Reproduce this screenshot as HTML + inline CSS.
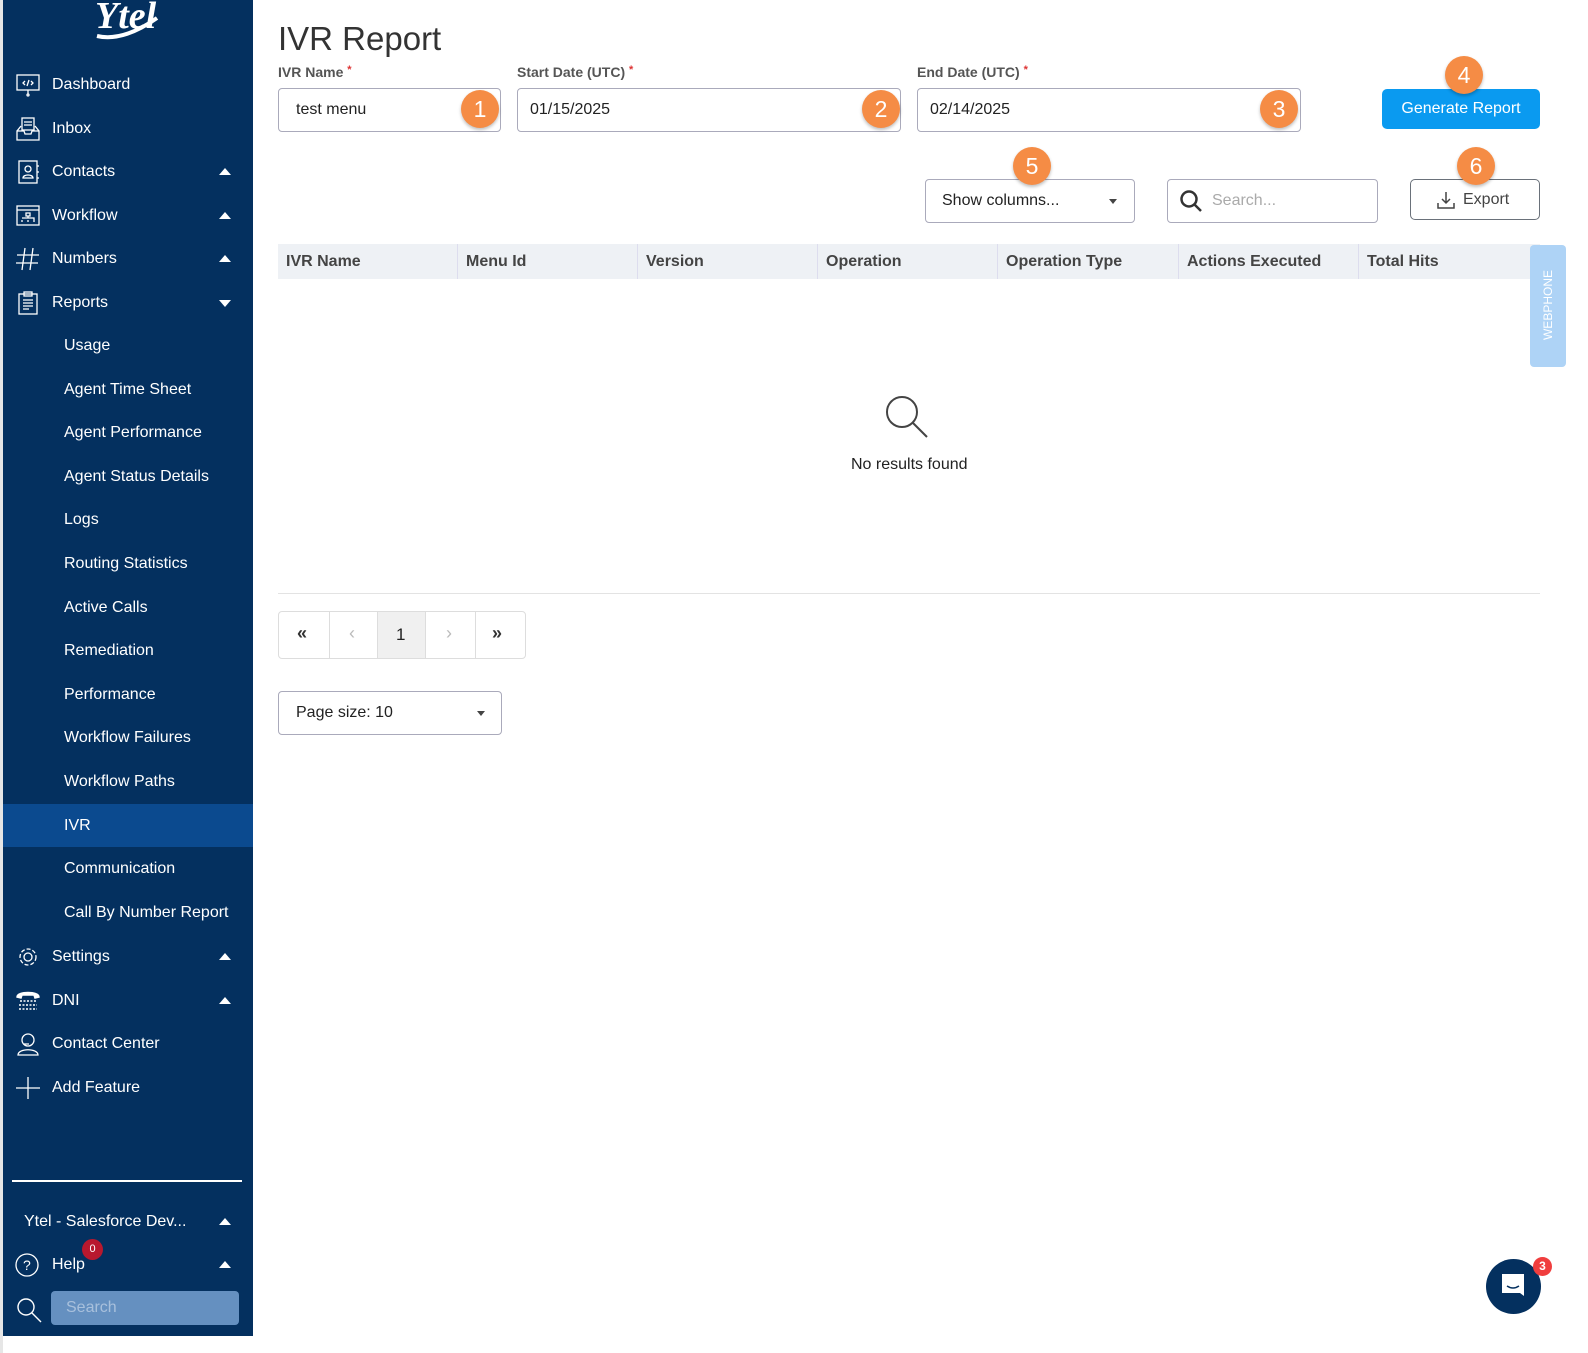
<!DOCTYPE html>
<html><head><meta charset="utf-8"><style>
*{box-sizing:border-box;margin:0;padding:0}
body{width:1588px;height:1353px;background:#fff;font-family:"Liberation Sans",sans-serif;position:relative;overflow:hidden;color:#222}
.sb{position:absolute;left:3px;top:0;width:250px;height:1336px;background:#04305f;color:#fff}
.it{position:absolute;left:0;width:250px;height:43px;font-size:16px;display:flex;align-items:center}
.it .ic{position:absolute;left:12px;top:10px;width:26px;height:24px}
.it .t{position:absolute;left:49px}
.it .s{position:absolute;left:61px}
.car{position:absolute;left:216px;width:0;height:0;border-left:6px solid transparent;border-right:6px solid transparent}
.up{border-bottom:7px solid #fff}
.dn{border-top:7px solid #fff}
.a{position:absolute}
.lbl{font-size:14px;font-weight:bold;color:#555;position:absolute;top:64px}
.lbl b{color:#d33;font-size:11px;vertical-align:top}
.inp{position:absolute;top:88px;height:44px;border:1px solid #aab;border-radius:4px;font-size:16px;padding:12px 0 0 12px;color:#222}
.badge{position:absolute;width:38px;height:38px;border-radius:50%;background:#f58c45;color:#fff;font-size:23px;text-align:center;line-height:38px;box-shadow:0 2px 3px rgba(0,0,0,.25)}
.th{position:absolute;top:244px;height:35px;background:#eef1f5;font-size:16px;font-weight:bold;color:#444;padding:9px 0 0 8px;border-right:1px solid #dde}
</style></head><body>
<div style="position:absolute;left:0;top:0;width:3px;height:1353px;background:#e6e6e6"></div>
<div class="sb">
 <div class="a" style="left:92px;top:-6px;font-size:38px;font-weight:bold;font-style:italic;font-family:'Liberation Serif',serif">Ytel</div>
 <svg class="a" style="left:90px;top:14px" width="70" height="28"><path d="M4 22 Q30 28 64 4" stroke="#fff" stroke-width="4" fill="none"/></svg>

 <div class="it" style="top:63px"><svg class="ic" viewBox="0 0 26 24" fill="none" stroke="#fff" stroke-width="1.3"><rect x="2" y="2" width="22" height="15"/><path d="M10 8l-2 2 2 2M16 8l2 2-2 2M14 7l-2 6M13 17v4"/><circle cx="13" cy="22" r="1"/></svg><span class="t">Dashboard</span></div>
 <div class="it" style="top:107px"><svg class="ic" viewBox="0 0 26 24" fill="none" stroke="#fff" stroke-width="1.3"><rect x="7" y="1" width="12" height="12"/><path d="M9 5h8M9 8h8M2 14l4-5M24 14l-4-5M2 14h7l1 3h6l1-3h7v9H2z"/></svg><span class="t">Inbox</span></div>
 <div class="it" style="top:150px"><svg class="ic" viewBox="0 0 26 24" fill="none" stroke="#fff" stroke-width="1.3"><rect x="4" y="1" width="18" height="22"/><circle cx="13" cy="9" r="3"/><path d="M8 18c0-4 10-4 10 0zM22 6h2M22 12h2M22 18h2"/></svg><span class="t">Contacts</span><span class="car up" style="top:18px"></span></div>
 <div class="it" style="top:194px"><svg class="ic" viewBox="0 0 26 24" fill="none" stroke="#fff" stroke-width="1.3"><rect x="2" y="2" width="22" height="19"/><path d="M2 6h22M11 9h4v3h-4zM13 12v2M7 14h12v2M7 16v2M13 16v2M19 16v2"/></svg><span class="t">Workflow</span><span class="car up" style="top:18px"></span></div>
 <div class="it" style="top:237px"><svg class="ic" viewBox="0 0 26 24" fill="none" stroke="#fff" stroke-width="1.3"><path d="M10 1l-3 22M18 1l-3 22M2 8h22M1 16h22"/></svg><span class="t">Numbers</span><span class="car up" style="top:18px"></span></div>
 <div class="it" style="top:281px"><svg class="ic" viewBox="0 0 26 24" fill="none" stroke="#fff" stroke-width="1.3"><rect x="4" y="3" width="18" height="20"/><rect x="9" y="1" width="8" height="4"/><path d="M8 9h10M8 12h10M8 15h10M8 18h6"/></svg><span class="t">Reports</span><span class="car dn" style="top:19px"></span></div>
 <div class="it" style="top:324px"><span class="s">Usage</span></div>
 <div class="it" style="top:368px"><span class="s">Agent Time Sheet</span></div>
 <div class="it" style="top:411px"><span class="s">Agent Performance</span></div>
 <div class="it" style="top:455px"><span class="s">Agent Status Details</span></div>
 <div class="it" style="top:498px"><span class="s">Logs</span></div>
 <div class="it" style="top:542px"><span class="s">Routing Statistics</span></div>
 <div class="it" style="top:586px"><span class="s">Active Calls</span></div>
 <div class="it" style="top:629px"><span class="s">Remediation</span></div>
 <div class="it" style="top:673px"><span class="s">Performance</span></div>
 <div class="it" style="top:716px"><span class="s">Workflow Failures</span></div>
 <div class="it" style="top:760px"><span class="s">Workflow Paths</span></div>
 <div class="it" style="top:804px;background:#0b4a8f"><span class="s">IVR</span></div>
 <div class="it" style="top:847px"><span class="s">Communication</span></div>
 <div class="it" style="top:891px"><span class="s">Call By Number Report</span></div>
 <div class="it" style="top:935px"><svg class="ic" viewBox="0 0 26 24" fill="none" stroke="#fff" stroke-width="1.3"><circle cx="13" cy="12" r="4"/><circle cx="13" cy="12" r="8" stroke-dasharray="4 2"/></svg><span class="t">Settings</span><span class="car up" style="top:18px"></span></div>
 <div class="it" style="top:979px"><svg class="ic" viewBox="0 0 26 24" fill="none" stroke="#fff" stroke-width="1.5"><path d="M2 8c0-6 22-6 22 0l-4 1-1-3H7L6 9z" fill="#fff"/><path d="M5 12h16M4 16h18M4 20h18" stroke-dasharray="2 1.5"/></svg><span class="t">DNI</span><span class="car up" style="top:18px"></span></div>
 <div class="it" style="top:1022px"><svg class="ic" viewBox="0 0 26 24" fill="none" stroke="#fff" stroke-width="1.3"><circle cx="13" cy="8" r="6"/><path d="M3 23c0-7 20-7 20 0zM9 12h5"/></svg><span class="t">Contact Center</span></div>
 <div class="it" style="top:1066px"><svg class="ic" viewBox="0 0 26 24" fill="none" stroke="#fff" stroke-width="1.3"><path d="M13 1v22M1 12h24"/></svg><span class="t">Add Feature</span></div>
 <div class="a" style="left:9px;top:1180px;width:230px;height:2px;background:#fff"></div>
 <div class="it" style="top:1200px"><span class="t" style="left:21px">Ytel - Salesforce Dev...</span><span class="car up" style="top:18px"></span></div>
 <div class="it" style="top:1243px"><svg class="ic" viewBox="0 0 26 24" fill="none" stroke="#fff" stroke-width="1.3"><circle cx="12" cy="12" r="11"/><text x="8" y="17" fill="#fff" stroke="none" font-size="14" font-family="Liberation Sans">?</text></svg><span class="t">Help</span><span class="car up" style="top:18px"></span></div>
 <div class="a" style="left:79px;top:1239px;width:21px;height:21px;border-radius:50%;background:#b8182e;font-size:11px;text-align:center;line-height:21px">0</div>
 <svg class="a" style="left:12px;top:1296px" width="28" height="28" fill="none" stroke="#fff" stroke-width="1.4"><circle cx="11" cy="11" r="8"/><path d="M17 17l9 9"/></svg>
 <div class="a" style="left:48px;top:1291px;width:188px;height:34px;background:#6590c0;border-radius:4px;color:#a8c0dc;font-size:16px;padding:8px 0 0 15px">Search</div>
</div>

<div class="a" style="left:278px;top:20px;font-size:33px;color:#333">IVR Report</div>
<div class="lbl" style="left:278px">IVR Name <b>*</b></div>
<div class="lbl" style="left:517px">Start Date (UTC) <b>*</b></div>
<div class="lbl" style="left:917px">End Date (UTC) <b>*</b></div>
<div class="inp" style="left:278px;width:223px;padding-left:17px">test menu</div>
<div class="inp" style="left:517px;width:384px">01/15/2025</div>
<div class="inp" style="left:917px;width:384px">02/14/2025</div>
<div class="badge" style="left:461px;top:90px">1</div>
<div class="badge" style="left:862px;top:90px">2</div>
<div class="badge" style="left:1260px;top:90px">3</div>
<div class="a" style="left:1382px;top:89px;width:158px;height:40px;background:#0a9af0;border-radius:5px;color:#fff;font-size:16px;text-align:center;line-height:40px">Generate Report</div>
<div class="badge" style="left:1445px;top:56px">4</div>

<div class="a" style="left:925px;top:179px;width:210px;height:44px;border:1px solid #aab;border-radius:4px;font-size:16px;padding:12px 0 0 16px">Show columns...</div>
<div class="car" style="left:1109px;top:199px;border-left:4px solid transparent;border-right:4px solid transparent;border-top:5px solid #444"></div>
<div class="badge" style="left:1013px;top:147px">5</div>
<div class="a" style="left:1167px;top:179px;width:211px;height:44px;border:1px solid #aab;border-radius:4px;font-size:16px;padding:12px 0 0 44px;color:#aaa">Search...</div>
<svg class="a" style="left:1178px;top:188px" width="26" height="26" fill="none" stroke="#333" stroke-width="2.5"><circle cx="11" cy="11" r="7.5"/><path d="M16 16l7 7"/></svg>
<div class="a" style="left:1410px;top:179px;width:130px;height:41px;border:1.5px solid #6a717a;border-radius:5px;font-size:16px;color:#444;padding:11px 0 0 52px">Export</div>
<svg class="a" style="left:1437px;top:191px" width="18" height="18" fill="none" stroke="#444" stroke-width="1.5"><path d="M9 1v11M5 8l4 4 4-4M1 12v5h16v-5"/></svg>
<div class="badge" style="left:1457px;top:147px">6</div>

<div class="th" style="left:278px;width:180px">IVR Name</div>
<div class="th" style="left:458px;width:180px">Menu Id</div>
<div class="th" style="left:638px;width:180px">Version</div>
<div class="th" style="left:818px;width:180px">Operation</div>
<div class="th" style="left:998px;width:181px">Operation Type</div>
<div class="th" style="left:1179px;width:180px">Actions Executed</div>
<div class="th" style="left:1359px;width:181px;border-right:none">Total Hits</div>
<div class="a" style="left:1530px;top:245px;width:36px;height:122px;background:#aed3f6;border-radius:4px"></div>
<div class="a" style="left:1512px;top:298px;width:72px;transform:rotate(-90deg);color:#fff;font-size:12px;text-align:center">WEBPHONE</div>

<svg class="a" style="left:884px;top:394px" width="46" height="46" fill="none" stroke="#444" stroke-width="2"><circle cx="18" cy="18" r="15"/><path d="M29 29l14 14"/></svg>
<div class="a" style="left:851px;top:456px;font-size:16px">No results found</div>
<div class="a" style="left:278px;top:593px;width:1262px;height:1px;background:#e3e3e3"></div>

<div class="a" style="left:278px;top:611px;width:248px;height:48px;border:1px solid #ddd;border-radius:4px"></div>
<div class="a" style="left:329px;top:612px;width:1px;height:46px;background:#ddd"></div>
<div class="a" style="left:377px;top:612px;width:49px;height:46px;background:#f0f0f0;border-left:1px solid #ddd;border-right:1px solid #ddd"></div>
<div class="a" style="left:475px;top:612px;width:1px;height:46px;background:#ddd"></div>
<div class="a" style="left:297px;top:623px;font-size:18px;font-weight:bold;color:#333">«</div>
<div class="a" style="left:349px;top:623px;font-size:18px;color:#bbb">‹</div>
<div class="a" style="left:396px;top:625px;font-size:17px">1</div>
<div class="a" style="left:446px;top:623px;font-size:18px;color:#bbb">›</div>
<div class="a" style="left:492px;top:623px;font-size:18px;font-weight:bold;color:#333">»</div>

<div class="a" style="left:278px;top:691px;width:224px;height:44px;border:1px solid #aab;border-radius:4px;font-size:16px;padding:12px 0 0 17px">Page size: 10</div>
<div class="car" style="left:477px;top:711px;border-left:4px solid transparent;border-right:4px solid transparent;border-top:5px solid #444"></div>

<div class="a" style="left:1486px;top:1259px;width:55px;height:55px;border-radius:50%;background:#04305f"></div>
<svg class="a" style="left:1500px;top:1272px" width="28" height="28"><path d="M2 2h22v22l-4-3H2z" fill="#fff"/><path d="M7 14q6 4 12 0" stroke="#04305f" stroke-width="1.5" fill="none"/></svg>
<div class="a" style="left:1533px;top:1257px;width:19px;height:19px;border-radius:50%;background:#f03e3e;color:#fff;font-size:12px;font-weight:bold;text-align:center;line-height:19px">3</div>
</body></html>
